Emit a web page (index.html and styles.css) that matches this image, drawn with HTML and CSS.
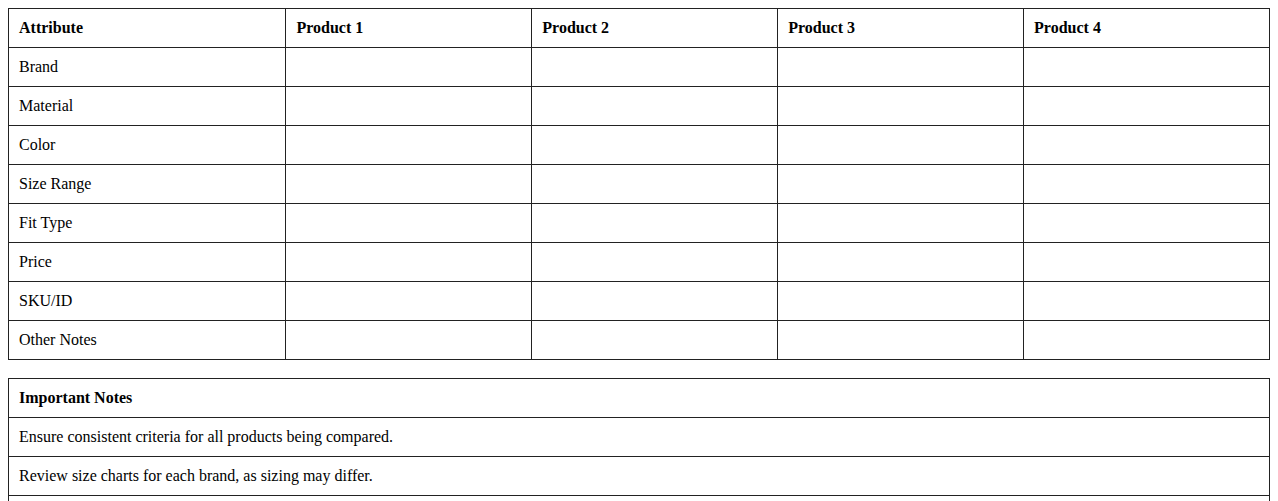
FILE: index.html
```html
<!DOCTYPE html>
<html>
<head>
<meta charset="utf-8">
<link rel="stylesheet" href="styles.css">
</head>
<body>
<table class="grid compare">
  <colgroup><col class="c-attr"><col class="c-prod"><col class="c-prod"><col class="c-prod"><col class="c-prod"></colgroup>
  <thead>
    <tr><th>Attribute</th><th>Product 1</th><th>Product 2</th><th>Product 3</th><th>Product 4</th></tr>
  </thead>
  <tbody>
    <tr><td>Brand</td><td></td><td></td><td></td><td></td></tr>
    <tr><td>Material</td><td></td><td></td><td></td><td></td></tr>
    <tr><td>Color</td><td></td><td></td><td></td><td></td></tr>
    <tr><td>Size Range</td><td></td><td></td><td></td><td></td></tr>
    <tr><td>Fit Type</td><td></td><td></td><td></td><td></td></tr>
    <tr><td>Price</td><td></td><td></td><td></td><td></td></tr>
    <tr><td>SKU/ID</td><td></td><td></td><td></td><td></td></tr>
    <tr><td>Other Notes</td><td></td><td></td><td></td><td></td></tr>
  </tbody>
</table>
<table class="grid notes">
  <thead><tr><th>Important Notes</th></tr></thead>
  <tbody>
    <tr><td>Ensure consistent criteria for all products being compared.</td></tr>
    <tr><td>Review size charts for each brand, as sizing may differ.</td></tr>
    <tr><td>Note any special features or unique selling points.</td></tr>
  </tbody>
</table>
</body>
</html>
```
FILE: styles.css
```css
body {
  margin: 8px;
  font-family: "Liberation Serif", "Times New Roman", serif;
  font-size: 16px;
  color: #000;
  background: #fff;
}
.grid {
  width: 100%;
  border-collapse: collapse;
  table-layout: fixed;
}
.grid th,
.grid td {
  border: 1px solid #222;
  padding: 10px;
  text-align: left;
  height: 18px;
  line-height: 18px;
}
.grid th {
  font-weight: bold;
}
.c-attr { width: 22%; }
.c-prod { width: 19.5%; }
.notes {
  margin-top: 18px;
}
```
